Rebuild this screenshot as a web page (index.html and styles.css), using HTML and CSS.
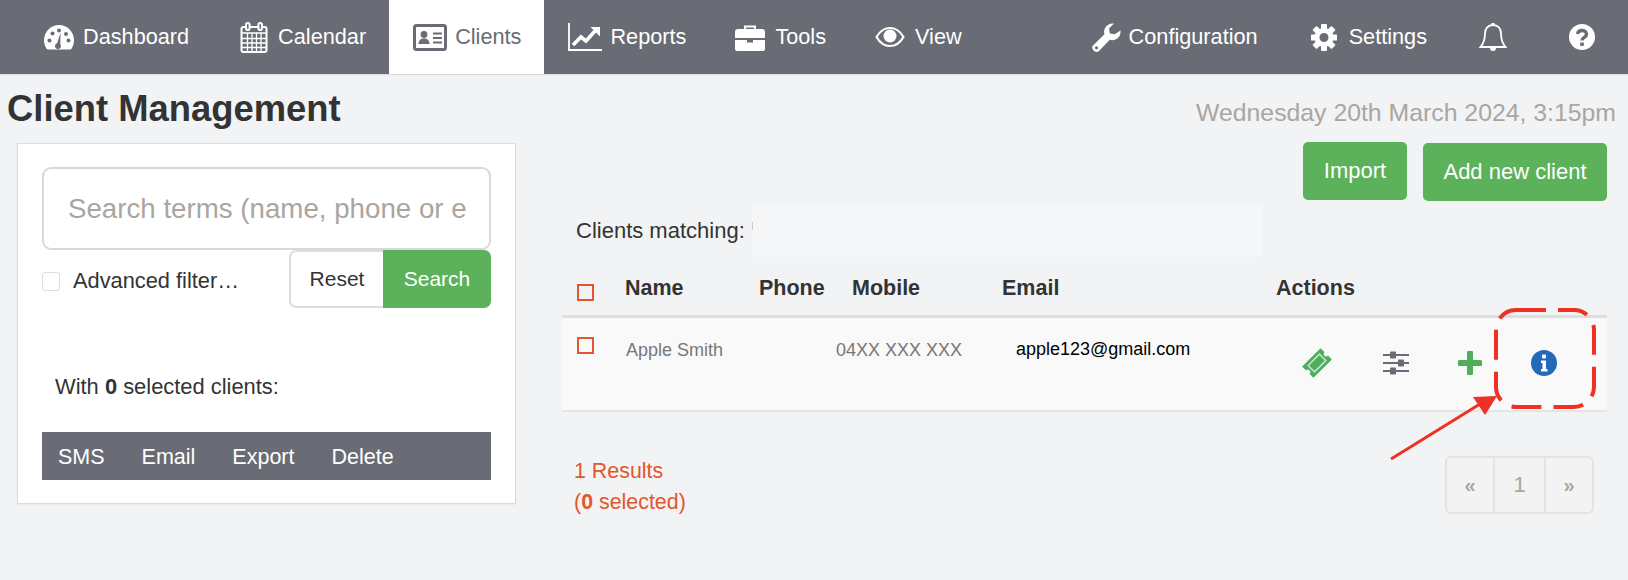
FILE: index.html
```html
<!DOCTYPE html>
<html lang="en">
<head>
  <meta charset="UTF-8">
  <title>Client Management</title>
  <link rel="stylesheet" href="styles.css">
</head>
<body>
  <nav class="navbar">
    <a class="nav-item nav-first">
      <svg class="nav-icon" width="32" height="27" viewBox="0 0 32 27"><path fill="currentColor" d="M16 1C7.700 1 1 7.800 1 16.200c0 3.100.9 6 2.500 8.500.4.500.9.800 1.500.800h22c.6 0 1.100-.3 1.500-.8 1.600-2.500 2.500-5.400 2.500-8.500C31 7.800 24.300 1 16 1z"/><g fill="#696c74"><circle cx="6.500" cy="16.500" r="2"/><circle cx="9.500" cy="9.500" r="2"/><circle cx="16" cy="6.500" r="2"/><circle cx="25.500" cy="16.500" r="2"/><circle cx="23" cy="10" r="2"/><path d="M17.500 9l-3.400 10.200a3 3 0 1 0 3.200 1z"/></g></svg>
      Dashboard
    </a>
    <a class="nav-item nav-calendar">
      <svg class="nav-icon nav-icon-wide" width="28" height="31" viewBox="0 0 28 31"><g fill="none" stroke="currentColor" stroke-width="2"><rect x="1.500" y="5" width="25" height="25" rx="2"/><path d="M2 11h24M2 16.500h24M2 21h24M2 25.500h24M7.500 11v19M12 11v19M16.500 11v19M21 11v19" stroke-width="1.300"/><rect x="6" y="1" width="3.600" height="7" rx="1.800" fill="#696c74"/><rect x="18.400" y="1" width="3.600" height="7" rx="1.800" fill="#696c74"/></g></svg>
      Calendar
    </a>
    <a class="nav-item nav-active">
      <svg class="nav-icon" width="34" height="27" viewBox="0 0 34 27"><rect x="1.500" y="1.500" width="31" height="24" rx="2" fill="none" stroke="currentColor" stroke-width="3"/><circle cx="11" cy="10.500" r="3.400" fill="currentColor"/><path fill="currentColor" d="M5.500 20c0-3.500 2-5.500 5.500-5.500s5.500 2 5.500 5.500z"/><path d="M20 9.500h9M20 14h9M20 18.500h9" stroke="currentColor" stroke-width="2"/></svg>
      Clients
    </a>
    <a class="nav-item">
      <svg class="nav-icon" width="34" height="28" viewBox="0 0 34 28"><path d="M1 0v27h33" fill="none" stroke="currentColor" stroke-width="1.800"/><path d="M5 22l8-8 5 4 9-10" fill="none" stroke="currentColor" stroke-width="3.600"/><path fill="currentColor" d="M22.500 4H32v9.500z"/></svg>
      Reports
    </a>
    <a class="nav-item">
      <svg class="nav-icon nav-icon-wide" width="30" height="27" viewBox="0 0 30 27"><path fill="none" stroke="currentColor" stroke-width="2" d="M10 6V2.500h10V6"/><path fill="currentColor" d="M3 5h24a3 3 0 0 1 3 3v6H0V8a3 3 0 0 1 3-3zM0 16h12v2.500h6V16h12v9a2 2 0 0 1-2 2H2a2 2 0 0 1-2-2z"/></svg>
      Tools
    </a>
    <a class="nav-item">
      <svg class="nav-icon nav-icon-wide" width="30" height="22" viewBox="0 0 30 22"><path fill="none" stroke="currentColor" stroke-width="2.200" d="M1.500 11C5 5 9.500 2 15 2s10 3 13.500 9C25 17 20.500 20 15 20S5 17 1.500 11z"/><circle cx="15" cy="10" r="6.500" fill="currentColor"/></svg>
      View
    </a>
    <div class="nav-right">
      <a class="nav-item nav-config">
        <svg class="nav-icon" width="29" height="29" viewBox="0 0 29 29"><path fill="currentColor" d="M28.500 7.500c.5 4-1.500 7.500-5 9-2 .8-4 .8-5.700.2L7 28c-1.300 1.300-3.300 1.300-4.800 0l-1-1c-1.400-1.400-1.300-3.500 0-4.800l11.300-10.900c-.6-1.800-.6-3.800.2-5.600C14.300 2 18 0 22 .5l-5 5 .8 5 5 .8z"/><circle cx="4.500" cy="24.800" r="1.600" fill="#696c74"/></svg>
        Configuration
      </a>
      <a class="nav-item nav-settings">
        <svg class="nav-icon" width="26" height="27" viewBox="0 0 26 27"><g fill="currentColor"><circle cx="13" cy="13.500" r="9.500"/><rect x="10" y="0" width="6" height="27" rx="1"/><rect x="10" y="0" width="6" height="27" rx="1" transform="rotate(45 13 13.500)"/><rect x="10" y="0" width="6" height="27" rx="1" transform="rotate(90 13 13.500)"/><rect x="10" y="0" width="6" height="27" rx="1" transform="rotate(135 13 13.500)"/></g><circle cx="13" cy="13.500" r="4.500" fill="#696c74"/></svg>
        Settings
      </a>
      <a class="nav-item nav-bell">
        <svg width="28" height="31" viewBox="0 0 28 31"><path fill="none" stroke="currentColor" stroke-width="1.800" d="M14 3c-5 0-8 3.500-8 8.500 0 6-1.500 10-4.500 13.500h25c-3-3.500-4.500-7.500-4.500-13.500C22 6.500 19 3 14 3z"/><path fill="currentColor" d="M12.500 1h3v2.500h-3zM11 26h6a3 3 0 0 1-6 0z"/></svg>
      </a>
      <a class="nav-item nav-help">
        <svg width="26" height="26" viewBox="0 0 26 26"><circle cx="13" cy="13" r="13" fill="currentColor"/><path fill="none" stroke="#696c74" stroke-width="3.400" d="M8.500 10c.5-2.500 2.300-3.500 4.500-3.500 2.600 0 4.500 1.500 4.500 3.700 0 3.300-4.500 3-4.500 6.300"/><rect x="11.200" y="18.500" width="3.600" height="3.400" fill="#696c74"/></svg>
      </a>
    </div>
  </nav>

  <div class="page-head">
    <h1>Client Management</h1>
    <div class="date">Wednesday 20th March 2024, 3:15pm</div>
  </div>

  <div class="content">
    <aside class="panel">
      <div class="search-box">Search terms (name, phone or e</div>
      <div class="filter-row">
        <label class="advanced"><span class="check-empty"></span>Advanced filter…</label>
        <div class="btn-group">
          <span class="btn-reset">Reset</span>
          <span class="btn-search">Search</span>
        </div>
      </div>
      <p class="with-selected">With <b>0</b> selected clients:</p>
      <div class="bulk-bar">
        <a>SMS</a>
        <a>Email</a>
        <a>Export</a>
        <a>Delete</a>
      </div>
    </aside>

    <main class="results">
      <div class="top-actions">
        <a class="btn-green btn-import">Import</a>
        <a class="btn-green btn-add">Add new client</a>
      </div>
      <div class="matching">
        <span>Clients matching:</span>
        <span class="redacted"><i class="tick"></i></span>
      </div>

      <div class="table-head">
        <span class="orange-check"></span>
        <span>Name</span>
        <span>Phone</span>
        <span>Mobile</span>
        <span>Email</span>
        <span>Actions</span>
      </div>
      <div class="table-row">
        <span class="orange-check"></span>
        <span>Apple Smith</span>
        <span>04XX XXX XXX</span>
        <span class="email">apple123@gmail.com</span>
        <div class="actions">
          <svg width="32" height="32" viewBox="0 0 32 32"><g transform="rotate(-45 16 16)"><path fill="#4fad5b" d="M3 8h26v5.500a2.500 2.500 0 0 0 0 5V24H3v-5.500a2.500 2.500 0 0 0 0-5z"/><rect x="8" y="11.500" width="16" height="9" fill="#4fad5b" stroke="#c4e6c8" stroke-width="1.500"/></g></svg>
          <svg width="28" height="28" viewBox="0 0 28 28"><path d="M1 6h26M1 14h26M1 22h26" stroke="#696c74" stroke-width="2"/><g fill="#696c74"><rect x="8" y="2.500" width="6" height="7" rx="1"/><rect x="16" y="10.500" width="6" height="7" rx="1"/><rect x="8" y="18.500" width="6" height="7" rx="1"/></g></svg>
          <svg width="24" height="24" viewBox="0 0 24 24"><path d="M12 2v20M2 12h20" stroke="#4fad5b" stroke-width="6" stroke-linecap="round"/></svg>
          <svg width="26" height="26" viewBox="0 0 26 26"><circle cx="13" cy="13" r="13" fill="#2468b8"/><path fill="#fff" d="M10 10.500h5v8.500h1.500v2.500h-6.500V19h1.500v-6H10z"/><rect x="11" y="4.500" width="4" height="4" rx="1" fill="#fff"/></svg>
        </div>
      </div>

      <div class="table-foot">
        <p class="result-count">1 Results<br>(<b>0</b> selected)</p>
        <div class="pagination">
          <span>«</span>
          <span class="page-num">1</span>
          <span>»</span>
        </div>
      </div>
    </main>
  </div>

  <svg class="annotation" width="1628" height="580" viewBox="0 0 1628 580">
    <rect x="1496" y="310" width="98" height="97" rx="20" fill="none" stroke="#ee3124" stroke-width="4" stroke-dasharray="30 12"/>
    <path d="M1391 459L1480 404" stroke="#ee3124" stroke-width="3"/>
    <path fill="#ee3124" d="M1497 396L1473 397L1485 415z"/>
  </svg>
</body>
</html>
```

FILE: styles.css
```css
body {
  margin: 0;
  font-family: "Liberation Sans", Arial, sans-serif;
  background-color: #f2f3f5;
  color: #333;
  position: relative;
  overflow: hidden;
}
p {
  margin: 0;
}

/* top menu */
.navbar {
  display: flex;
  height: 74px;
  padding-left: 19px;
  background-color: #696c74;
  border-bottom: 1px solid #d8dadd;
  color: #fff;
  font-size: 21.7px;
}
.nav-item {
  display: flex;
  align-items: center;
  padding: 0 25px 0 24px;
}
.nav-first {
  padding-right: 27px;
}
.nav-calendar {
  padding-right: 23px;
}
.nav-icon {
  margin-right: 8px;
}
.nav-icon-wide {
  margin-right: 10px;
}
.nav-active {
  padding: 0 23px 0 24px;
  background-color: #fff;
  color: #696c74;
}
.nav-right {
  display: flex;
  margin-left: auto;
  padding-right: 9px;
}
.nav-config {
  padding-right: 29px;
}
.nav-settings .nav-icon {
  margin-right: 12px;
}
.nav-settings {
  padding-right: 26px;
}
.nav-bell {
  padding: 0 24px 0 26px;
}
.nav-help {
  padding: 0 24px 0 38px;
}

/* title line */
.page-head {
  display: flex;
  justify-content: space-between;
  height: 68px;
}
h1 {
  margin: 13px 0 0 7px;
  font-size: 36.4px;
  line-height: 42px;
  font-weight: bold;
}
.date {
  margin: 23px 12px 0 0;
  font-size: 24.8px;
  line-height: 30px;
  color: #aaa69f;
}

.content {
  display: flex;
  align-items: flex-start;
  padding-left: 17px;
}

/* left panel */
.panel {
  width: 449px;
  padding: 23px 24px;
  background-color: #fff;
  border: 1px solid #dcdcdc;
  box-shadow: 0 1px 2px rgba(0, 0, 0, 0.05);
}
.search-box {
  height: 79px;
  padding-left: 24px;
  border: 2px solid #d8d8d8;
  border-radius: 9px;
  font-size: 27.7px;
  line-height: 79px;
  color: #aaa69f;
  white-space: nowrap;
  overflow: hidden;
}
.filter-row {
  display: flex;
  justify-content: space-between;
  height: 58px;
}
.advanced {
  display: flex;
  align-items: center;
  padding-top: 4px;
  font-size: 21.8px;
}
.check-empty {
  width: 16px;
  height: 17px;
  margin-right: 13px;
  border: 1px solid #ddd;
  border-radius: 3px;
}
.btn-group {
  display: flex;
  width: 202px;
  font-size: 21px;
  line-height: 54px;
  text-align: center;
}
.btn-reset {
  flex: 1;
  background-color: #fff;
  border: 2px solid #ddd;
  border-right: none;
  border-radius: 7px 0 0 7px;
}
.btn-search {
  width: 108px;
  line-height: 58px;
  background-color: #5cb25a;
  color: #fff;
  border-radius: 0 7px 7px 0;
}
.with-selected {
  height: 60px;
  padding: 64px 0 0 13px;
  font-size: 21.9px;
  line-height: 30px;
}
.bulk-bar {
  display: flex;
  gap: 37px;
  height: 48px;
  padding-left: 16px;
  background-color: #696c74;
  color: #fff;
  font-size: 21.5px;
  line-height: 50px;
}

/* right side */
.results {
  width: 1045px;
  margin-left: 46px;
  margin-top: -1px;
}
.top-actions {
  display: flex;
  justify-content: flex-end;
  gap: 16px;
}
.btn-green {
  height: 58px;
  background-color: #5cb25a;
  color: #fff;
  border-radius: 5px;
  font-size: 22px;
  line-height: 58px;
  text-align: center;
}
.btn-import {
  width: 104px;
}
.btn-add {
  width: 184px;
  margin-top: 1px;
}
.matching {
  display: flex;
  align-items: center;
  height: 54px;
  margin-top: 3px;
  padding-left: 14px;
  font-size: 22px;
}
.redacted {
  display: flex;
  align-items: center;
  width: 510px;
  height: 52px;
  margin-left: 7px;
  background-color: #f5f6f8;
}
.tick {
  width: 1px;
  height: 8px;
  margin-bottom: 10px;
  background-color: #c9c9c9;
}
.table-head {
  display: grid;
  grid-template-columns: 63px 134px 93px 150px 274px 1fr;
  align-items: center;
  height: 54px;
  padding-top: 3px;
  border-bottom: 3px solid #dddee0;
  font-size: 21.5px;
  font-weight: bold;
}
.orange-check {
  display: block;
  width: 13px;
  height: 13px;
  margin-left: 15px;
  border: 2px solid #e2572b;
}
.table-head .orange-check {
  margin-top: 8px;
}
.table-row {
  display: grid;
  grid-template-columns: 64px 210px 180px 264px 1fr;
  height: 92px;
  background-color: #f9f9f9;
  border-bottom: 2px solid #e4e5e7;
  color: #777;
  font-size: 18px;
  line-height: 24px;
}
.table-row span {
  margin-top: 20px;
}
.table-row .orange-check {
  margin-top: 19px;
}
.table-row .email {
  margin-top: 19px;
  color: #000;
  font-size: 18px;
}
.actions {
  display: flex;
  align-items: center;
  justify-content: space-between;
  width: 256px;
  height: 90px;
  margin-left: 21px;
}
.table-foot {
  display: flex;
  justify-content: space-between;
  padding: 44px 13px 0 12px;
}
.result-count {
  font-size: 21.4px;
  line-height: 31px;
  color: #e2572b;
}
.pagination {
  display: flex;
  height: 54px;
  border: 2px solid #e3e3e3;
  border-radius: 6px;
  background-color: #f3f3f3;
  color: #aaa69f;
  font-size: 20px;
  font-weight: bold;
  line-height: 54px;
  text-align: center;
}
.pagination span {
  width: 46px;
}
.pagination .page-num {
  width: 49px;
  border-left: 2px solid #e3e3e3;
  border-right: 2px solid #e3e3e3;
  font-size: 22px;
  font-weight: normal;
}

.annotation {
  position: absolute;
  top: 0;
  left: 0;
  pointer-events: none;
}
```
